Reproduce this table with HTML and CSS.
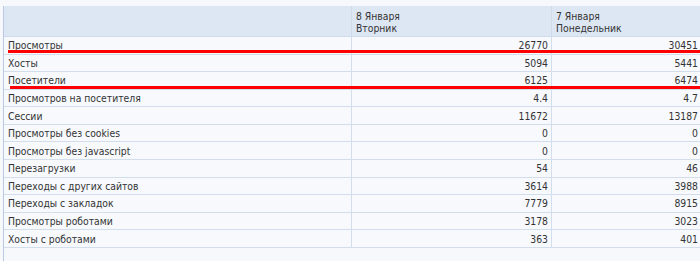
FILE: index.html
```html
<!DOCTYPE html>
<html lang="ru">
<head>
<meta charset="utf-8">
<link rel="stylesheet" href="styles.css">
</head>
<body>
<div class="wrap">
  <table class="stats">
    <thead>
      <tr>
        <th class="name"></th>
        <th class="day">8 Января<br>Вторник</th>
        <th class="day">7 Января<br>Понедельник</th>
      </tr>
    </thead>
    <tbody>
      <tr><td>Просмотры</td><td class="num">26770</td><td class="num">30451</td></tr>
      <tr><td>Хосты</td><td class="num">5094</td><td class="num">5441</td></tr>
      <tr><td>Посетители</td><td class="num">6125</td><td class="num">6474</td></tr>
      <tr><td>Просмотров на посетителя</td><td class="num">4.4</td><td class="num">4.7</td></tr>
      <tr><td>Сессии</td><td class="num">11672</td><td class="num">13187</td></tr>
      <tr><td>Просмотры без cookies</td><td class="num">0</td><td class="num">0</td></tr>
      <tr><td>Просмотры без javascript</td><td class="num">0</td><td class="num">0</td></tr>
      <tr><td>Перезагрузки</td><td class="num">54</td><td class="num">46</td></tr>
      <tr><td>Переходы с других сайтов</td><td class="num">3614</td><td class="num">3988</td></tr>
      <tr><td>Переходы с закладок</td><td class="num">7779</td><td class="num">8915</td></tr>
      <tr><td>Просмотры роботами</td><td class="num">3178</td><td class="num">3023</td></tr>
      <tr><td>Хосты с роботами</td><td class="num">363</td><td class="num">401</td></tr>
    </tbody>
  </table>
  <div class="mark mark-1"></div>
  <div class="mark mark-2"></div>
</div>
</body>
</html>
```
FILE: styles.css
```css
html, body {
  margin: 0;
  padding: 0;
  background: #f6f8fc;
}
body {
  width: 700px;
  height: 261px;
  overflow: hidden;
  font-family: "DejaVu Sans Condensed", "DejaVu Sans", sans-serif;
  font-size: 10.3px;
  color: #333;
}
.wrap {
  position: relative;
  margin-top: 6px;
  margin-left: 3px;
  height: 255px;
  border-left: 1px solid #b9cbe3;
}
.stats {
  width: 697px;
  border-collapse: collapse;
  table-layout: fixed;
}
.stats th {
  background: #dde7f4;
  height: 29px;
  padding: 1px 4px 0;
  text-align: left;
  font-weight: normal;
  vertical-align: middle;
  line-height: 12px;
  border-left: 1px solid #cfdbea;
  border-bottom: 1px solid #cfdbea;
}
.stats th.name {
  width: 339px;
  border-left: none;
}
.stats th.day:nth-child(2) {
  width: 191px;
}
.stats td {
  height: 16.58px;
  padding: 0 4px;
  line-height: 12px;
  background: #f7f9fd;
  border-bottom: 1px solid #d3deec;
  border-left: 1px solid #d3deec;
  white-space: nowrap;
}
.stats td:first-child {
  border-left: none;
}
.stats td.num {
  text-align: right;
  padding-right: 3px;
}
.mark {
  position: absolute;
  right: 0;
  height: 3px;
  background: #ff0000;
}
.mark-1 {
  left: 4px;
  top: 44px;
}
.mark-2 {
  left: 6px;
  top: 80px;
}
```
